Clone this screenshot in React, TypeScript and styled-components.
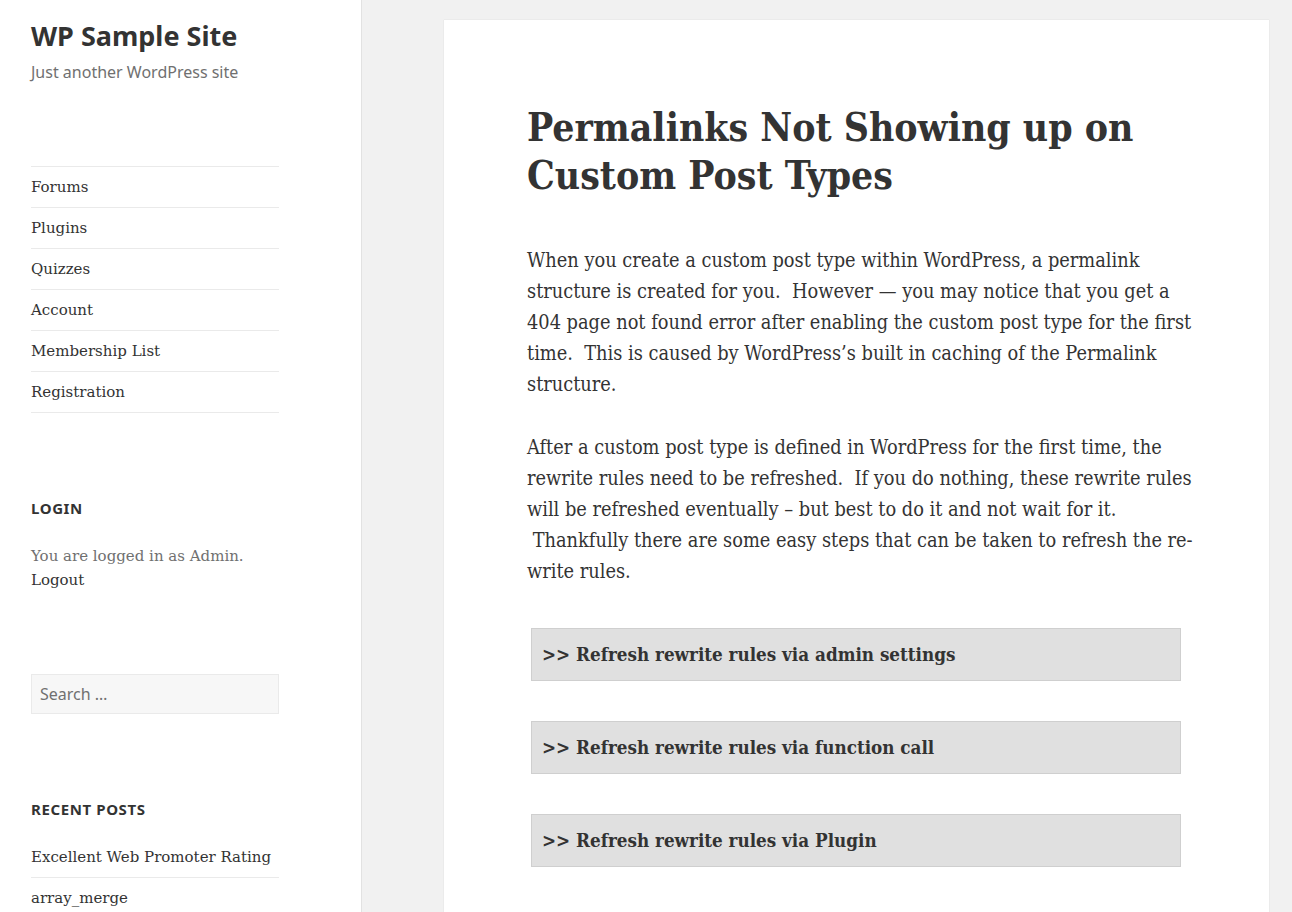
import React from 'react'
import styled, { createGlobalStyle } from 'styled-components'

const GlobalStyle = createGlobalStyle`
  html, body {
    margin: 0;
    padding: 0;
    background: #f1f1f1;
    color: #333;
  }
  * { box-sizing: border-box; }
`

const serif = `"DejaVu Serif", "Liberation Serif", serif`
const sans = `"Noto Sans", "Open Sans", sans-serif`

const menu = ['Forums', 'Plugins', 'Quizzes', 'Account', 'Membership List', 'Registration']
const recent = ['Excellent Web Promoter Rating', 'array_merge']
const toggles = [
  'Refresh rewrite rules via admin settings',
  'Refresh rewrite rules via function call',
  'Refresh rewrite rules via Plugin',
]

const App = () => {
  return (
    <>
      <GlobalStyle />
      <Page>
        <Sidebar>
          <SiteTitle>WP Sample Site</SiteTitle>
          <Tagline>Just another WordPress site</Tagline>

          <NavList>
            {menu.map((item) => (
              <NavItem key={item}>{item}</NavItem>
            ))}
          </NavList>

          <Widget>
            <WidgetTitle>Login</WidgetTitle>
            <LoginText>
              You are logged in as Admin.
              <br />
              <LoginLink>Logout</LoginLink>
            </LoginText>
          </Widget>

          <SearchWidget>
            <SearchInput placeholder="Search …" />
          </SearchWidget>

          <Widget>
            <WidgetTitle>Recent Posts</WidgetTitle>
            <PostList>
              {recent.map((item) => (
                <PostItem key={item}>{item}</PostItem>
              ))}
            </PostList>
          </Widget>
        </Sidebar>

        <Main>
          <Article>
            <EntryTitle>Permalinks Not Showing up on Custom Post Types</EntryTitle>
            <Content>
              <p>
                When you create a custom post type within WordPress, a permalink structure is created for you.&nbsp; However — you may notice that you get a 404 page not found error after enabling the custom post type for the first time.&nbsp; This is caused by WordPress’s built in caching of the Permalink structure.
              </p>
              <p>
                After a custom post type is defined in WordPress for the first time, the rewrite rules need to be refreshed.&nbsp; If you do nothing, these rewrite rules will be refreshed eventually – but best to do it and not wait for it. &nbsp;Thankfully there are some easy steps that can be taken to refresh the re-write rules.
              </p>
              <ToggleList>
                {toggles.map((t) => (
                  <Toggle key={t}>&gt;&gt; {t}</Toggle>
                ))}
              </ToggleList>
            </Content>
          </Article>
        </Main>
      </Page>
    </>
  )
}

export default App

const Page = styled.div`
  display: flex;
  height: 912px;
  overflow: hidden;
`

const Sidebar = styled.aside`
  width: 362px;
  flex-shrink: 0;
  background: #fff;
  border-right: 1px solid #e2e2e2;
  padding: 17px 82px 0 31px;
`

const SiteTitle = styled.h1`
  margin: 0;
  font-family: ${sans};
  font-weight: 700;
  font-size: 27px;
  line-height: 38px;
  color: #333;
`

const Tagline = styled.p`
  margin: 0;
  font-family: ${sans};
  font-size: 16px;
  line-height: 34px;
  color: #707070;
`

const NavList = styled.ul`
  list-style: none;
  margin: 77px 0 0;
  padding: 0;
  border-top: 1px solid #eaeaea;
`

const NavItem = styled.li`
  font-family: ${serif};
  font-size: 15px;
  line-height: 40px;
  border-bottom: 1px solid #eaeaea;
  color: #333;
`

const Widget = styled.section`
  margin-top: 83px;
`

const WidgetTitle = styled.h2`
  margin: 0;
  font-family: ${sans};
  font-weight: 700;
  font-size: 15px;
  line-height: 24px;
  letter-spacing: 0.04em;
  text-transform: uppercase;
  color: #333;
`

const LoginText = styled.p`
  margin: 24px 0 0;
  font-family: ${serif};
  font-size: 15px;
  line-height: 24px;
  color: #707070;
`

const LoginLink = styled.span`
  color: #333;
`

const SearchWidget = styled.div`
  margin-top: 82px;
`

const SearchInput = styled.input`
  display: block;
  width: 248px;
  height: 40px;
  padding: 0 8px;
  background: #f7f7f7;
  border: 1px solid #eaeaea;
  font-family: ${sans};
  font-size: 16px;
  color: #707070;
  outline: none;
  &::placeholder {
    color: #707070;
  }
`

const PostList = styled.ul`
  list-style: none;
  margin: 16px 0 0;
  padding: 0;
`

const PostItem = styled.li`
  font-family: ${serif};
  font-size: 15px;
  line-height: 40px;
  border-bottom: 1px solid #eaeaea;
  &:last-child {
    border-bottom: none;
  }
`

const Main = styled.main`
  flex: 1;
  padding: 20px 23px 0 82px;
`

const Article = styled.article`
  background: #fff;
  box-shadow: 0 0 1px rgba(0, 0, 0, 0.15);
  height: 100%;
  padding: 84px 74px 40px 83px;
`

const EntryTitle = styled.h1`
  margin: 0;
  font-family: ${serif};
  font-stretch: condensed;
  font-weight: 700;
  font-size: 38.8px;
  line-height: 48px;
  color: #333;
`

const Content = styled.div`
  margin-top: 45px;
  font-family: ${serif};
  font-stretch: condensed;
  font-size: 19.8px;
  line-height: 31px;
  color: #333;

  p {
    margin: 0 0 32px;
  }
`

const ToggleList = styled.div`
  display: flex;
  flex-direction: column;
  gap: 40px;
  margin-top: 41px;
`

const Toggle = styled.div`
  width: 650px;
  margin-left: 4px;
  height: 53px;
  display: flex;
  align-items: center;
  padding: 0 10px;
  background: #e0e0e0;
  border: 1px solid #cfcfcf;
  font-weight: 700;
  font-size: 18.7px;
`
